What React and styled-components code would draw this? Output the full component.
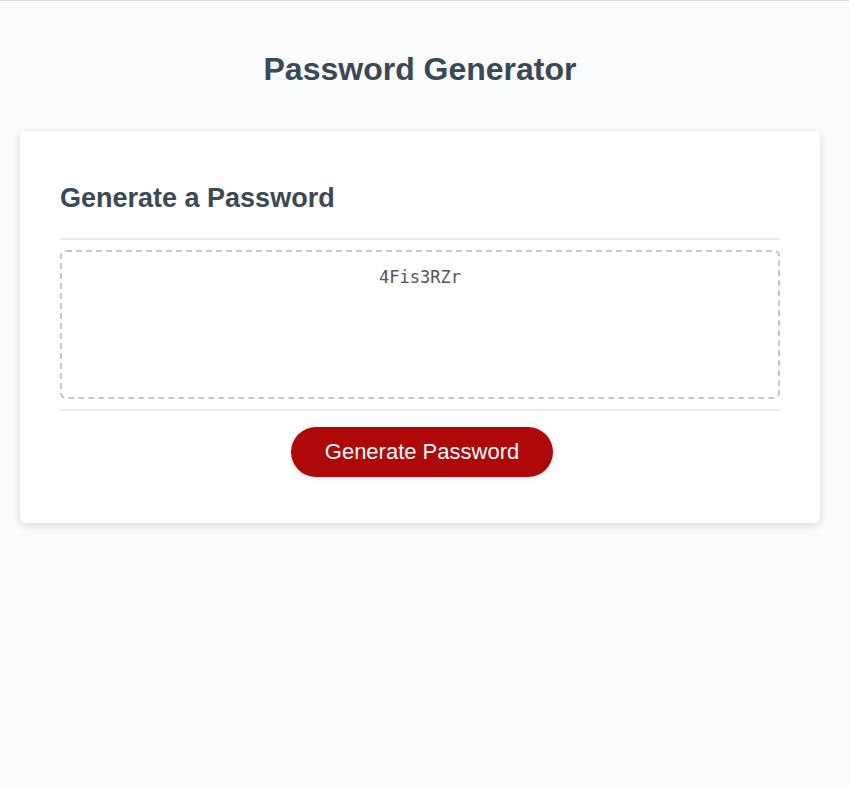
import { useState } from "react";
import styled, { createGlobalStyle } from "styled-components";

const GlobalStyle = createGlobalStyle`
  *, *::before, *::after {
    box-sizing: border-box;
  }
  html, body {
    margin: 0;
    padding: 0;
    height: 100%;
  }
  body {
    font-family: "Liberation Sans", Arial, sans-serif;
    background-color: #f9fbfd;
    border-top: 1px solid #dadce0;
  }
`;

const Wrapper = styled.div`
  max-width: 840px;
  padding: 30px 20px 0;
`;

const Header = styled.header`
  text-align: center;
  color: hsl(206, 17%, 28%);
`;

const Title = styled.h1`
  font-size: 32px;
  font-weight: bold;
  margin: 20px 0 43px;
`;

const Card = styled.div`
  background-color: #fff;
  border-radius: 5px;
  box-shadow: rgba(0, 0, 0, 0.15) 0px 2px 8px 0px;
  color: hsl(206, 17%, 28%);
  font-size: 18px;
  max-width: 800px;
  padding: 30px 40px;
`;

const Divider = styled.div`
  width: 100%;
  height: 2px;
  background: #e7e9eb;
`;

const CardTitle = styled.h2`
  font-size: 27px;
  font-weight: bold;
  margin: 22px 0 24px;
`;

const Output = styled.textarea`
  appearance: none;
  display: block;
  width: 100%;
  height: 149px;
  margin: 10px 0;
  padding: 15px;
  font-family: "DejaVu Sans Mono", "Liberation Mono", monospace;
  font-size: 17px;
  line-height: 20px;
  color: #555;
  text-align: center;
  border: 2px dashed #c0c7cf;
  border-radius: 6px;
  resize: none;
  overflow: hidden;
  outline: none;
`;

const Footer = styled.div`
  text-align: center;
`;

const Button = styled.button`
  border: none;
  background-color: hsl(360, 91%, 36%);
  border-radius: 25px;
  box-shadow: rgba(0, 0, 0, 0.1) 0px 1px 6px 0px;
  color: #fff;
  display: inline-block;
  font-family: "Liberation Sans", Arial, sans-serif;
  font-size: 22px;
  line-height: 22px;
  margin: 16px 16px 16px 20px;
  padding: 14px 34px;
  cursor: pointer;
`;

const chars =
  "ABCDEFGHIJKLMNOPQRSTUVWXYZabcdefghijklmnopqrstuvwxyz0123456789";

const App = () => {
  const [password, setPassword] = useState("4Fis3RZr");

  const generate = () => {
    let out = "";
    for (let i = 0; i < 8; i++) {
      out += chars[Math.floor(Math.random() * chars.length)];
    }
    setPassword(out);
  };

  return (
    <>
      <GlobalStyle />
      <Wrapper>
        <Header>
          <Title>Password Generator</Title>
        </Header>
        <Card>
          <CardTitle>Generate a Password</CardTitle>
          <Divider />
          <Output readOnly value={password} aria-label="Generated Password" />
          <Divider />
          <Footer>
            <Button onClick={generate}>Generate Password</Button>
          </Footer>
        </Card>
      </Wrapper>
    </>
  );
};

export default App;
